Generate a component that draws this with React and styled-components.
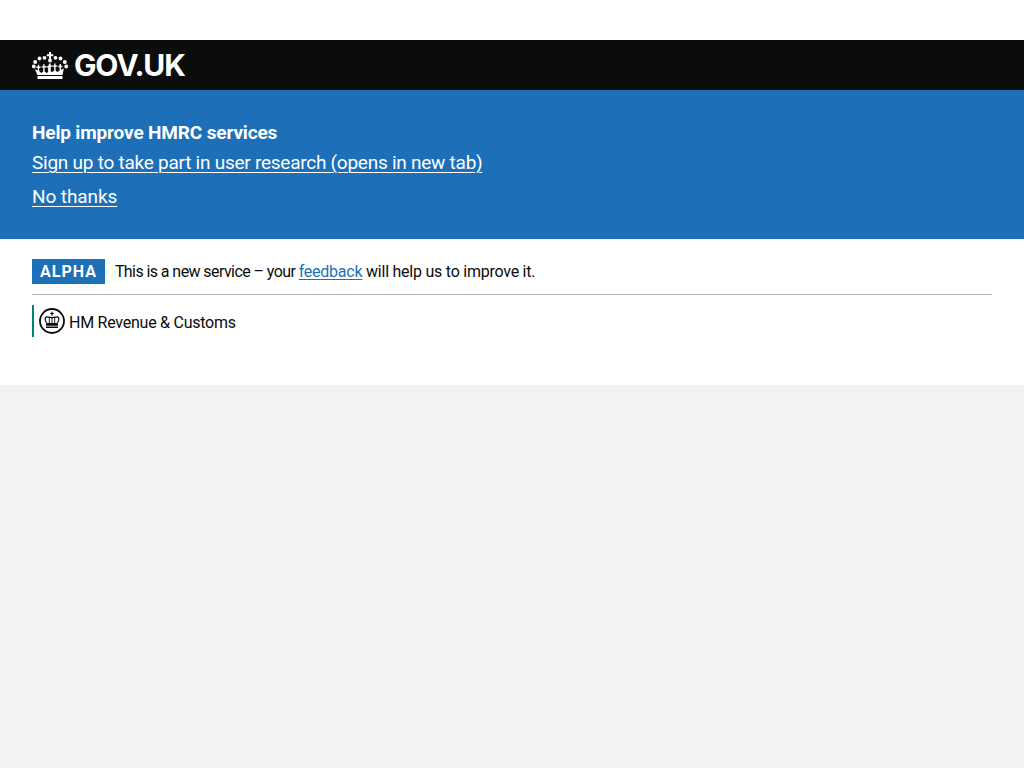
import React from 'react';
import styled, { createGlobalStyle } from 'styled-components';

const Global = createGlobalStyle`
  html, body { margin: 0; padding: 0; background: #f3f2f1; }
  body { font-family: Roboto, "Noto Sans", sans-serif; color: #0b0c0c; }
`;

const Page = styled.div`
  min-height: 768px;
  display: flex;
  flex-direction: column;
`;

const Spacer = styled.div`
  height: 40px;
  background: #fff;
`;

const Header = styled.header`
  height: 50px;
  background: #0b0c0c;
  padding: 0 32px;
  display: flex;
  align-items: center;
  gap: 6px;
`;

const Wordmark = styled.span`
  color: #fff;
  font-family: Inter, sans-serif;
  font-weight: 700;
  font-size: 30px;
  line-height: 50px;
  letter-spacing: -1.15px;
`;

const Banner = styled.section`
  background: #1d70b8;
  color: #fff;
  height: 149px;
  box-sizing: border-box;
  padding: 30px 32px 0;
`;

const BannerTitle = styled.h2`
  margin: 0 0 5px;
  font-size: 19px;
  line-height: 25px;
  font-weight: 700;
  letter-spacing: -0.15px;
`;

const BannerLink = styled.a`
  display: block;
  color: #fff;
  font-size: 19px;
  line-height: 25px;
  margin-bottom: 9px;
  letter-spacing: ${props => props.$tracking || '-0.25px'};
  text-decoration: underline;
  text-decoration-thickness: 1px;
  text-underline-offset: 3px;
`;

const Content = styled.div`
  background: #fff;
  height: 146px;
  box-sizing: border-box;
  padding: 20px 32px 0;
`;

const PhaseBar = styled.div`
  display: flex;
  align-items: center;
  gap: 10px;
  height: 25px;
  padding-bottom: 10px;
  border-bottom: 1px solid #b1b4b6;
`;

const Tag = styled.strong`
  background: #1d70b8;
  color: #fff;
  font-size: 16px;
  font-weight: 700;
  line-height: 25px;
  padding: 0 8px;
  letter-spacing: 1px;
`;

const PhaseText = styled.span`
  font-size: 16px;
  line-height: 25px;
  letter-spacing: -0.24px;
`;

const PhaseLead = styled.span`
  letter-spacing: -0.58px;
`;

const PhaseLink = styled.a`
  color: #1d70b8;
  text-decoration: underline;
  text-underline-offset: 2px;
`;

const OrgLogo = styled.div`
  margin-top: 10px;
  height: 32px;
  border-left: 2px solid #008670;
  padding-left: 5px;
  display: flex;
  align-items: center;
  gap: 4px;
`;

const OrgName = styled.span`
  font-size: 16px;
  letter-spacing: -0.25px;
  padding-top: 2px;
`;

function Crown({ size = 36, color = '#fff' }) {
  return (
    <svg width={size} height={size * 0.75} viewBox="0 0 36 27" fill={color} aria-hidden="true">
      <path d="M17 0h2v2.200h2.200v2H19v2.800h-2V4.200h-2.200v-2H17z" />
      <circle cx="18" cy="8.500" r="1.900" />
      <circle cx="12.500" cy="5.800" r="1.900" />
      <circle cx="23.500" cy="5.800" r="1.900" />
      <circle cx="7.500" cy="6.500" r="1.900" />
      <circle cx="28.500" cy="6.500" r="1.900" />
      <circle cx="3.200" cy="10" r="2" />
      <circle cx="32.800" cy="10" r="2" />
      <circle cx="1.800" cy="14.500" r="1.900" />
      <circle cx="34.200" cy="14.500" r="1.900" />
      <path d="M17.300 11.500h1.400v1.900h1.900v1.400h-1.900v4.300l1.300 1.100 2.200-1.600v-3.800h-1.400v-1.400h1.400v-1.900h1.400v1.900h1.700v1.400h-1.700v3.800l1.700 1.500 2.300-1.700v-3.200h-1.300v-1.400h1.300v-1.800h1.400v1.800h1.400v1.400h-1.400v2.600l2.900-1.300L30.500 23h-25L2.900 17.300l2.900 1.300v-2.600H4.400v-1.400h1.400v-1.800h1.400v1.800h1.300v1.400H7.200v3.200l2.300 1.700 1.700-1.500v-3.800H9.500v-1.400h1.700v-1.900h1.400v1.900H14v1.400h-1.400v3.800l2.200 1.600 1.300-1.100v-4.300h-1.900v-1.400h1.900z" />
      <path d="M5.500 24h25v3h-25z" />
    </svg>
  );
}

function CrestBadge() {
  return (
    <svg width="26" height="26" viewBox="0 0 26 26" aria-hidden="true">
      <circle cx="13" cy="13" r="12" fill="#fff" stroke="#0b0c0c" strokeWidth="1.800" />
      <path d="M12.400 3.800h1.200V5h1.200v1.100h-1.200v1.700h-1.200V6.100h-1.200V5h1.200z" fill="#0b0c0c" />
      <path d="M8 15.500C5.500 12 5.500 9 7.800 8.800c2.200-.2 3.700 1 5.200 1s3-1.200 5.200-1c2.300.2 2.300 3.200-.2 6.700z" fill="none" stroke="#0b0c0c" strokeWidth="1.200" />
      <path d="M13 9.500v6M10.300 9.500v6M15.700 9.500v6" stroke="#0b0c0c" strokeWidth=".9" />
      <path d="M7 16h12v1.700H7zM7 18.500h12V20H7z" fill="#0b0c0c" />
    </svg>
  );
}

export default function App() {
  return (
    <Page>
      <Global />
      <Spacer />
      <Header>
        <Crown />
        <Wordmark>GOV.UK</Wordmark>
      </Header>
      <Banner>
        <BannerTitle>Help improve HMRC services</BannerTitle>
        <BannerLink href="#">Sign up to take part in user research (opens in new tab)</BannerLink>
        <BannerLink href="#" $tracking="-0.1px">No thanks</BannerLink>
      </Banner>
      <Content>
        <PhaseBar>
          <Tag>ALPHA</Tag>
          <PhaseText>
            <PhaseLead>This is a new service – your </PhaseLead>
            <PhaseLink href="#">feedback</PhaseLink> will help us to improve it.
          </PhaseText>
        </PhaseBar>
        <OrgLogo>
          <CrestBadge />
          <OrgName>HM Revenue &amp; Customs</OrgName>
        </OrgLogo>
      </Content>
    </Page>
  );
}
